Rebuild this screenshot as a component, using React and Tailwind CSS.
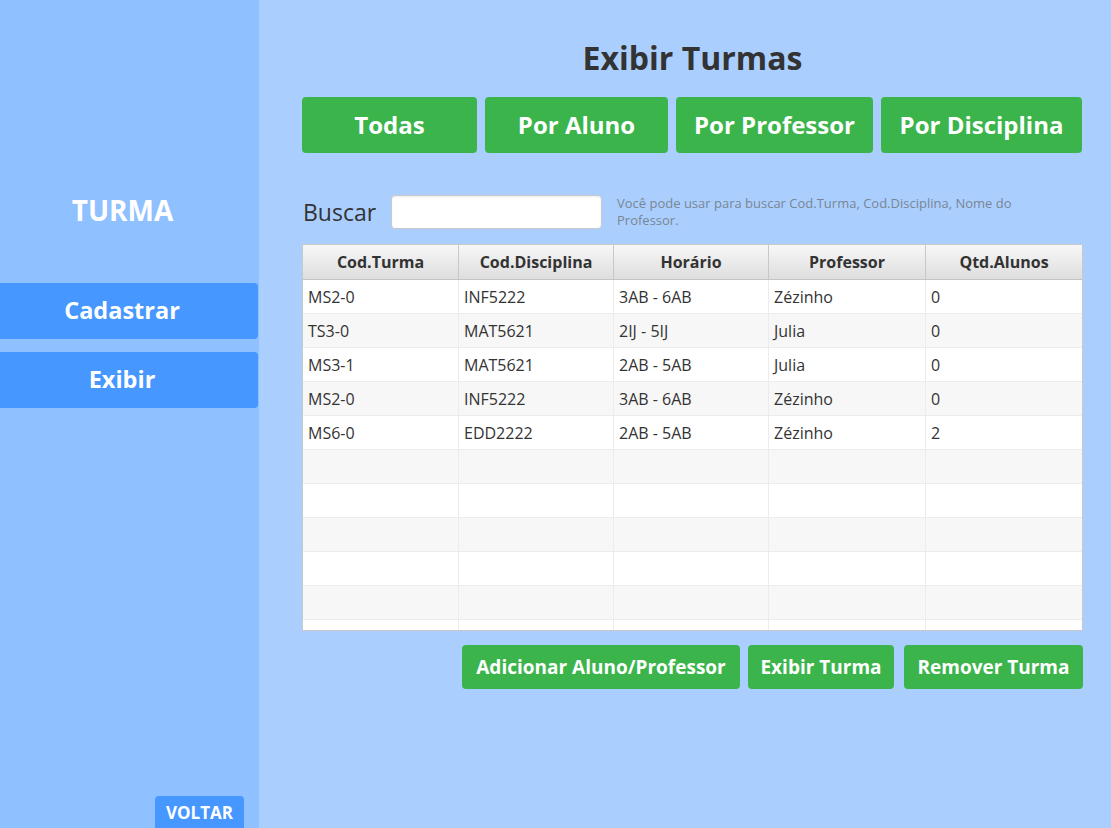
import React from "react";

const rows = [
  ["MS2-0", "INF5222", "3AB - 6AB", "Zézinho", "0"],
  ["TS3-0", "MAT5621", "2IJ - 5IJ", "Julia", "0"],
  ["MS3-1", "MAT5621", "2AB - 5AB", "Julia", "0"],
  ["MS2-0", "INF5222", "3AB - 6AB", "Zézinho", "0"],
  ["MS6-0", "EDD2222", "2AB - 5AB", "Zézinho", "2"],
  ["", "", "", "", ""],
  ["", "", "", "", ""],
  ["", "", "", "", ""],
  ["", "", "", "", ""],
  ["", "", "", "", ""],
  ["", "", "", "", ""],
];

const cols = ["w-[156px]", "w-[155px]", "w-[155px]", "w-[157px]", "w-[156px]"];
const heads = ["Cod.Turma", "Cod.Disciplina", "Horário", "Professor", "Qtd.Alunos"];

export default function App() {
  return (
    <div className="flex h-[828px] w-[1111px] overflow-hidden font-['Open_Sans',sans-serif]">
      <aside className="flex w-[259px] flex-col bg-[#8fc0ff] pt-[192px]">
        <div className="w-[245px] text-center text-[28px] font-bold leading-[36px] text-white">TURMA</div>
        <div className="mt-[55px] flex h-[56px] w-[258px] items-center justify-center rounded-r-[4px] bg-[#4697ff] pr-[14px] text-[23.5px] font-bold text-white">
          Cadastrar
        </div>
        <div className="mt-[13px] flex h-[56px] w-[258px] items-center justify-center rounded-r-[4px] bg-[#4697ff] pr-[14px] text-[23.5px] font-bold text-white">
          Exibir
        </div>
        <div className="ml-[155px] mt-auto flex h-[32px] w-[89px] items-center justify-center rounded-t-[4px] bg-[#4697ff] pt-[2px] text-[17px] font-bold text-white">
          VOLTAR
        </div>
      </aside>
      <main className="flex flex-1 flex-col bg-[#aacfff] pl-[43px] pt-[38px]">
        <h1 className="w-[781px] text-center text-[32px] font-bold leading-[40px] text-[#333333]">Exibir Turmas</h1>
        <div className="mt-[19px] flex gap-2">
          {[
            ["Todas", "w-[175px]"],
            ["Por Aluno", "w-[183px]"],
            ["Por Professor", "w-[197px]"],
            ["Por Disciplina", "w-[201px]"],
          ].map(([t, w]) => (
            <div key={t} className={`flex h-[56px] ${w} items-center justify-center rounded-[4px] bg-[#3bb54b] text-[24px] font-bold text-white`}>
              {t}
            </div>
          ))}
        </div>
        <div className="mt-[42px] flex h-[34px] items-center">
          <span className="ml-[1px] w-[88px] text-[23px] text-[#333333]">Buscar</span>
          <div className="h-[34px] w-[211px] rounded-[4px] border border-[#c9c9c9] bg-white shadow-[inset_0_1px_2px_rgba(0,0,0,0.08)]" />
          <p className="ml-[15px] w-[420px] text-[13px] leading-[17px] text-[#7a8592]">
            Você pode usar para buscar Cod.Turma, Cod.Disciplina, Nome do Professor.
          </p>
        </div>
        <div className="mt-[15px] h-[387px] w-[781px] overflow-hidden border border-[#c8c8c8] bg-white">
          <div className="flex h-[35px] border-b border-[#c4c4c4] bg-gradient-to-b from-[#f7f7f7] to-[#dedede]">
            {heads.map((h, i) => (
              <div key={h} className={`${cols[i]} flex items-center justify-center border-r border-[#c8c8c8] text-[16px] font-bold text-[#333333] last:border-r-0`}>
                {h}
              </div>
            ))}
          </div>
          {rows.map((r, ri) => (
            <div key={ri} className={`flex h-[34px] border-b border-[#ececec] ${ri % 2 === 0 ? "bg-white" : "bg-[#f7f7f7]"}`}>
              {r.map((c, ci) => (
                <div key={ci} className={`${cols[ci]} flex items-center border-r border-[#ececec] pl-[5px] text-[16px] text-[#333333] last:border-r-0`}>
                  {c}
                </div>
              ))}
            </div>
          ))}
        </div>
        <div className="mt-[14px] flex w-[781px] justify-end">
          <div className="flex h-[44px] w-[278px] items-center justify-center rounded-[4px] bg-[#3bb54b] text-[19px] font-bold text-white">
            Adicionar Aluno/Professor
          </div>
          <div className="ml-[8px] flex h-[44px] w-[146px] items-center justify-center rounded-[4px] bg-[#3bb54b] text-[19px] font-bold text-white">
            Exibir Turma
          </div>
          <div className="ml-[10px] flex h-[44px] w-[179px] items-center justify-center rounded-[4px] bg-[#3bb54b] text-[19px] font-bold text-white">
            Remover Turma
          </div>
        </div>
      </main>
    </div>
  );
}
